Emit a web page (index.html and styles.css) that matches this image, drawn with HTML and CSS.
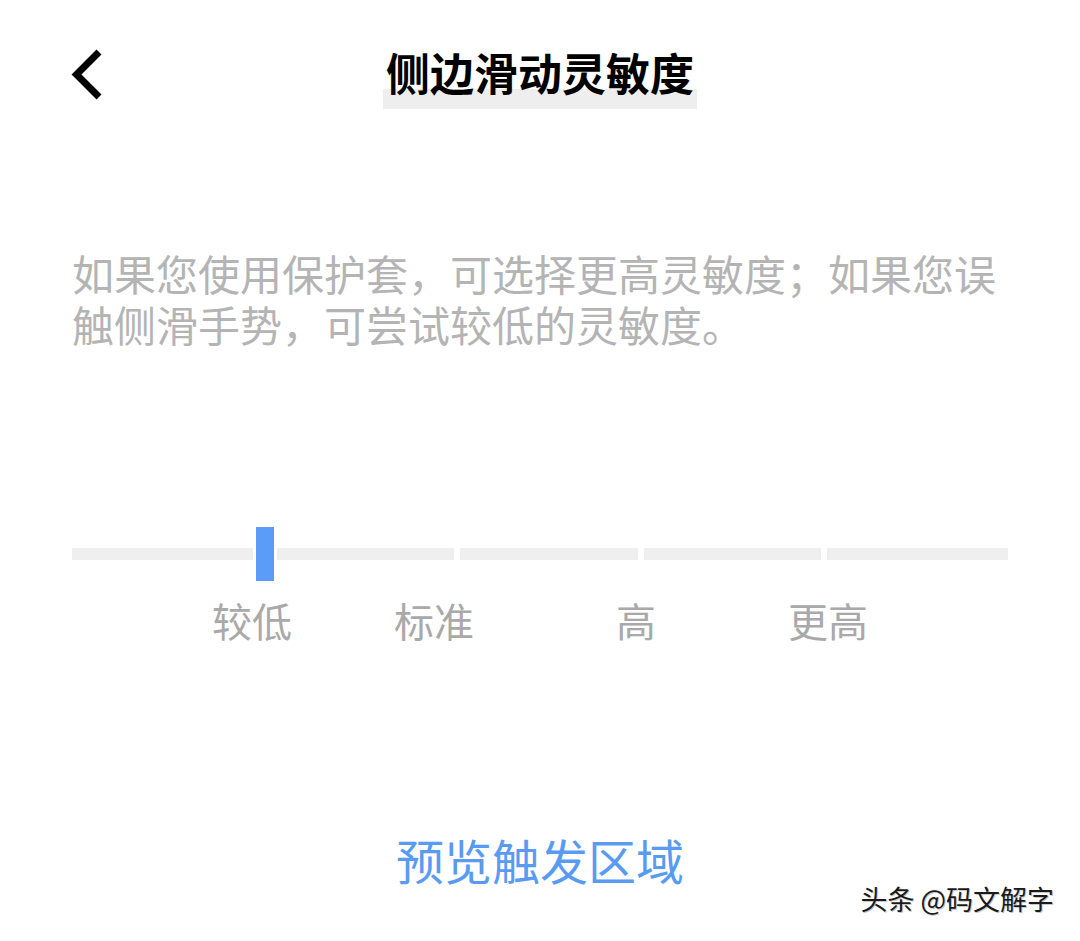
FILE: index.html
```html
<!DOCTYPE html>
<html lang="zh-CN">
<head>
<meta charset="utf-8">
<title>侧边滑动灵敏度</title>
<link rel="stylesheet" href="styles.css">
</head>
<body>
<div class="page">
  <header class="header">
    <div class="back">
      <svg class="back-icon" width="36" height="56" viewBox="0 0 36 56" aria-hidden="true">
        <path d="M29 5 L6.5 27.5 L29 50" fill="none" stroke="#000" stroke-width="7" stroke-linejoin="miter"/>
      </svg>
    </div>
    <h1 class="title"><span class="title-text">侧边滑动灵敏度</span></h1>
    <div class="spacer"></div>
  </header>

  <p class="desc">如果您使用保护套，可选择更高灵敏度；如果您误触侧滑手势，可尝试较低的灵敏度。</p>

  <div class="slider">
    <div class="seg seg-a"></div>
    <div class="thumb"></div>
    <div class="seg seg-b"></div>
    <div class="seg seg-c"></div>
    <div class="seg seg-d"></div>
    <div class="seg seg-e"></div>
  </div>

  <div class="labels">
    <span class="label l1">较低</span>
    <span class="label l2">标准</span>
    <span class="label l3">高</span>
    <span class="label l4">更高</span>
  </div>

  <div class="preview">预览触发区域</div>

  <div class="watermark">头条 @码文解字</div>
</div>
</body>
</html>
```

FILE: styles.css
```css
html, body {
  margin: 0;
  padding: 0;
  background: #ffffff;
}

body {
  font-family: "Noto Sans CJK SC", "Noto Sans", "Liberation Sans", sans-serif;
  width: 1080px;
  height: 941px;
  overflow: hidden;
}

.page {
  width: 1080px;
}

.header {
  display: grid;
  grid-template-columns: 1fr auto 1fr;
  align-items: start;
  padding-top: 50px;
}

.back {
  padding-left: 70px;
}

.back-icon {
  display: block;
  margin-top: -3px;
}

.title {
  margin: 0;
  font-size: 44px;
  font-weight: 700;
  line-height: 44px;
  color: #000;
}

.title-text {
  display: inline-block;
  padding: 0 3px 15px 3px;
  background: linear-gradient(to bottom, rgba(238,238,238,0) 39px, #eeeeee 39px);
}

.desc {
  margin: 138px 72px 0 72px;
  font-size: 42px;
  line-height: 51px;
  color: #b4b4b4;
}

.slider {
  display: flex;
  align-items: center;
  margin: 178px 0 0 72px;
  width: 936px;
  height: 54px;
}

.seg {
  height: 12px;
  background: #efefef;
  flex: none;
}

.seg-a { width: 181px; }
.seg-b { width: 177px; }
.seg-c { width: 178px; margin-left: 6px; }
.seg-d { width: 177px; margin-left: 6px; }
.seg-e { width: 181px; margin-left: 6px; }

.thumb {
  flex: none;
  width: 18px;
  height: 54px;
  margin: 0 3px;
  background: #5a9cf8;
}

.labels {
  display: flex;
  margin-top: 19px;
  font-size: 40px;
  line-height: 40px;
  color: #a9a9a9;
}

.label { flex: none; }
.l1 { margin-left: 212px; }
.l2 { margin-left: 102px; }
.l3 { margin-left: 142px; }
.l4 { margin-left: 132px; }

.preview {
  margin-top: 195px;
  text-align: center;
  font-size: 48px;
  line-height: 48px;
  color: #5a9bf2;
}

.watermark {
  margin-top: 2px;
  padding-right: 26px;
  text-align: right;
  font-size: 27px;
  line-height: 27px;
  color: #1a1a1a;
  text-shadow: 1px 1px 0 #c8c8c8;
}
```
